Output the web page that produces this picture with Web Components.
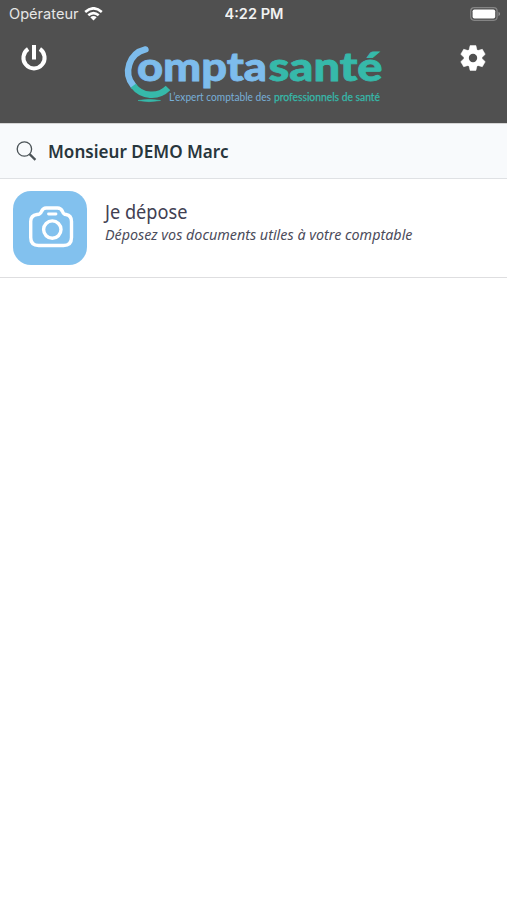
<!DOCTYPE html>
<html lang="fr">
<head>
<meta charset="utf-8">
<title>Comptasanté</title>
<style>
html,body{margin:0;height:100%;background:#fff}
body{font-family:"Open Sans","Noto Sans",sans-serif;overflow:hidden}
</style>
</head>
<body>
<app-screen></app-screen>
<script>
function define(name, markup) {
  const t = document.createElement('template');
  t.innerHTML = markup;
  customElements.define(name, class extends HTMLElement {
    constructor() {
      super();
      this.attachShadow({mode: 'open'}).append(t.content.cloneNode(true));
    }
  });
}

define('status-bar', `
<style>
:host{display:grid;grid-template-columns:1fr auto 1fr;align-items:center;height:28px;padding:0 6px 0 9px}
.left{display:flex;align-items:center;gap:5px}
.battery{justify-self:end}
svg{display:block}
text{font:400 14.5px Inter,sans-serif;fill:#e6e6e6}
.time text{font-weight:600;font-size:14px;fill:#f2f2f2}
</style>
<div class="left"><svg width="70" height="28"><text x="0" y="19" textLength="69.5" lengthAdjust="spacingAndGlyphs">Opérateur</text></svg>
<svg width="19" height="14" viewBox="0 0 19 14" fill="none" stroke="#fff" stroke-width="2.6"><path d="M1.2 4.9Q9.5-2.3 17.8 4.9"/><path d="M4.3 8.3Q9.5 3.8 14.7 8.3"/><path d="M6.3 10.3Q9.5 7.6 12.7 10.3L9.5 13.6Z" fill="#fff" stroke="none"/></svg></div>
<div class="time"><svg width="61" height="28"><text x="-.5" y="19" textLength="59" lengthAdjust="spacingAndGlyphs">4:22 PM</text></svg></div>
<svg class="battery" width="31" height="14" viewBox="0 0 31 14"><rect x=".7" y=".7" width="26.4" height="12.6" rx="3.5" fill="none" stroke="#858585" stroke-width="1.2"/><rect x="2.6" y="2.4" width="22.6" height="9.2" rx="1.8" fill="#fff"/><path d="M28.5 4.8Q31.8 7 28.5 9.2Z" fill="#929292"/></svg>`);

define('brand-logo', `
<style>
:host{display:block;width:270px;height:90px}
svg{display:block;overflow:visible}
.name{font:900 40.5px Lato,sans-serif;stroke-width:.8}
.tag{font:400 11px Lato,sans-serif}
</style>
<svg width="270" height="90" viewBox="119 30 270 90">
<g fill="none" stroke-width="6.4">
<path d="M145.500 49.400A22.500 22.500 0 0 0 133.300 85.600" stroke="#7dbcec" stroke-linecap="round"/>
<path d="M133.300 85.600A23 23 0 0 0 168 88" stroke="#36b9aa"/>
</g>
<path d="M138 100.500Q149 98.300 160.500 100.500Q149 102.800 138 100.500Z" fill="#36b9aa" stroke="#36b9aa" stroke-width=".6"/>
<text class="name" x="137" y="81" fill="#7dbcec" stroke="#7dbcec" textLength="130" lengthAdjust="spacingAndGlyphs">ompta</text>
<text class="name" x="268.500" y="81" fill="#36b9aa" stroke="#36b9aa" textLength="114" lengthAdjust="spacingAndGlyphs">santé</text>
<text class="tag" x="169" y="100.500" fill="#78afd8" textLength="102" lengthAdjust="spacingAndGlyphs">L’expert comptable des</text>
<text class="tag" x="274" y="100.500" fill="#36b9aa" stroke="#36b9aa" stroke-width=".25" textLength="106" lengthAdjust="spacingAndGlyphs">professionnels de santé</text>
</svg>`);

define('app-header', `
<style>
:host{display:block;height:123px;background:#505050}
.bar{display:grid;grid-template-columns:1fr 270px 1fr;padding:2px 20px 0}
.icon{display:block;margin-top:14px}
.gear{justify-self:end}
</style>
<status-bar></status-bar>
<div class="bar">
<svg class="icon" width="28" height="28" viewBox="0 0 28 28" fill="none" stroke="#fff" stroke-width="4"><path d="M8.100 5A10.600 10.600 0 1 0 19.900 5"/><path d="M14 1V15.500"/></svg>
<brand-logo></brand-logo>
<svg class="icon gear" width="28" height="28" viewBox="-14 -14 28 28" fill="#fff">
<defs><mask id="hole"><rect x="-14" y="-14" width="28" height="28" fill="#fff"/><circle r="4.200" fill="#000"/></mask></defs>
<g mask="url(#hole)"><circle r="9.200"/><path id="t" d="M-4.200-7L-2.900-12.400H2.900L4.200-7V7L2.900 12.400H-2.900L-4.200 7Z" stroke="#fff" stroke-width=".5" stroke-linejoin="round"/><use href="#t" transform="rotate(60)"/><use href="#t" transform="rotate(120)"/></g></svg>
</div>`);

define('client-bar', `
<style>
:host{display:flex;align-items:center;gap:12px;box-sizing:border-box;height:56px;padding:0 16px;background:#f8fafc;border-bottom:1px solid #dfe1e4;border-top:1px solid #d5d5d5}
svg{display:block}
text{font:600 17.500px "Noto Sans",sans-serif;fill:#28363c}
</style>
<svg width="21" height="22" viewBox="0 0 21 22" fill="none" stroke="#4a5256"><circle cx="8.400" cy="9" r="7.200" stroke-width="1.300"/><path d="M13.600 14.100L19.400 19.900" stroke-width="2.200"/></svg>
<svg width="184" height="30"><text x="-1" y="21.500" textLength="180.500" lengthAdjust="spacingAndGlyphs">Monsieur DEMO Marc</text></svg>`);

define('menu-item', `
<style>
:host{display:flex;gap:18px;box-sizing:border-box;height:99px;padding:12px 13px;border-bottom:1px solid #dedee0;background:#fff}
.tile{width:74px;height:74px;border-radius:18px;background:#82c1ee;flex:none}
svg{display:block;overflow:visible}
.title{font:400 19px "Noto Sans",sans-serif;fill:#414052}
.sub{font:italic 400 14px "Noto Sans",sans-serif;fill:#4c4c5b}
</style>
<div class="tile"><svg width="74" height="74" viewBox="0 0 74 74" fill="none" stroke="#fff" stroke-width="3.400" stroke-linejoin="round" stroke-linecap="round"><path d="M24 23.500Q27.500 23.500 28.500 20.500Q30 17 33 17H44.500Q48 17 49.500 20.500Q50.500 23.500 53 23.500Q58.500 24.500 58.500 30.500V46.500Q58.500 54.500 50.500 54.500H25.700Q17.700 54.500 17.700 46.500V30.500Q17.700 24.500 24 23.500Z"/><circle cx="39.300" cy="38.600" r="8.700"/><path d="M35.500 23H43" stroke-width="2.800"/></svg></div>
<svg width="320" height="62"><text class="title" x="0" y="27.500" textLength="82.500" lengthAdjust="spacingAndGlyphs">Je dépose</text><text class="sub" x="0" y="48.500" textLength="307.500" lengthAdjust="spacingAndGlyphs">Déposez vos documents utiles à votre comptable</text></svg>`);

define('app-screen', `
<style>:host{display:flex;flex-direction:column;height:900px;background:#fff}</style>
<app-header></app-header><client-bar></client-bar><menu-item></menu-item>`);
</script>
</body>
</html>
